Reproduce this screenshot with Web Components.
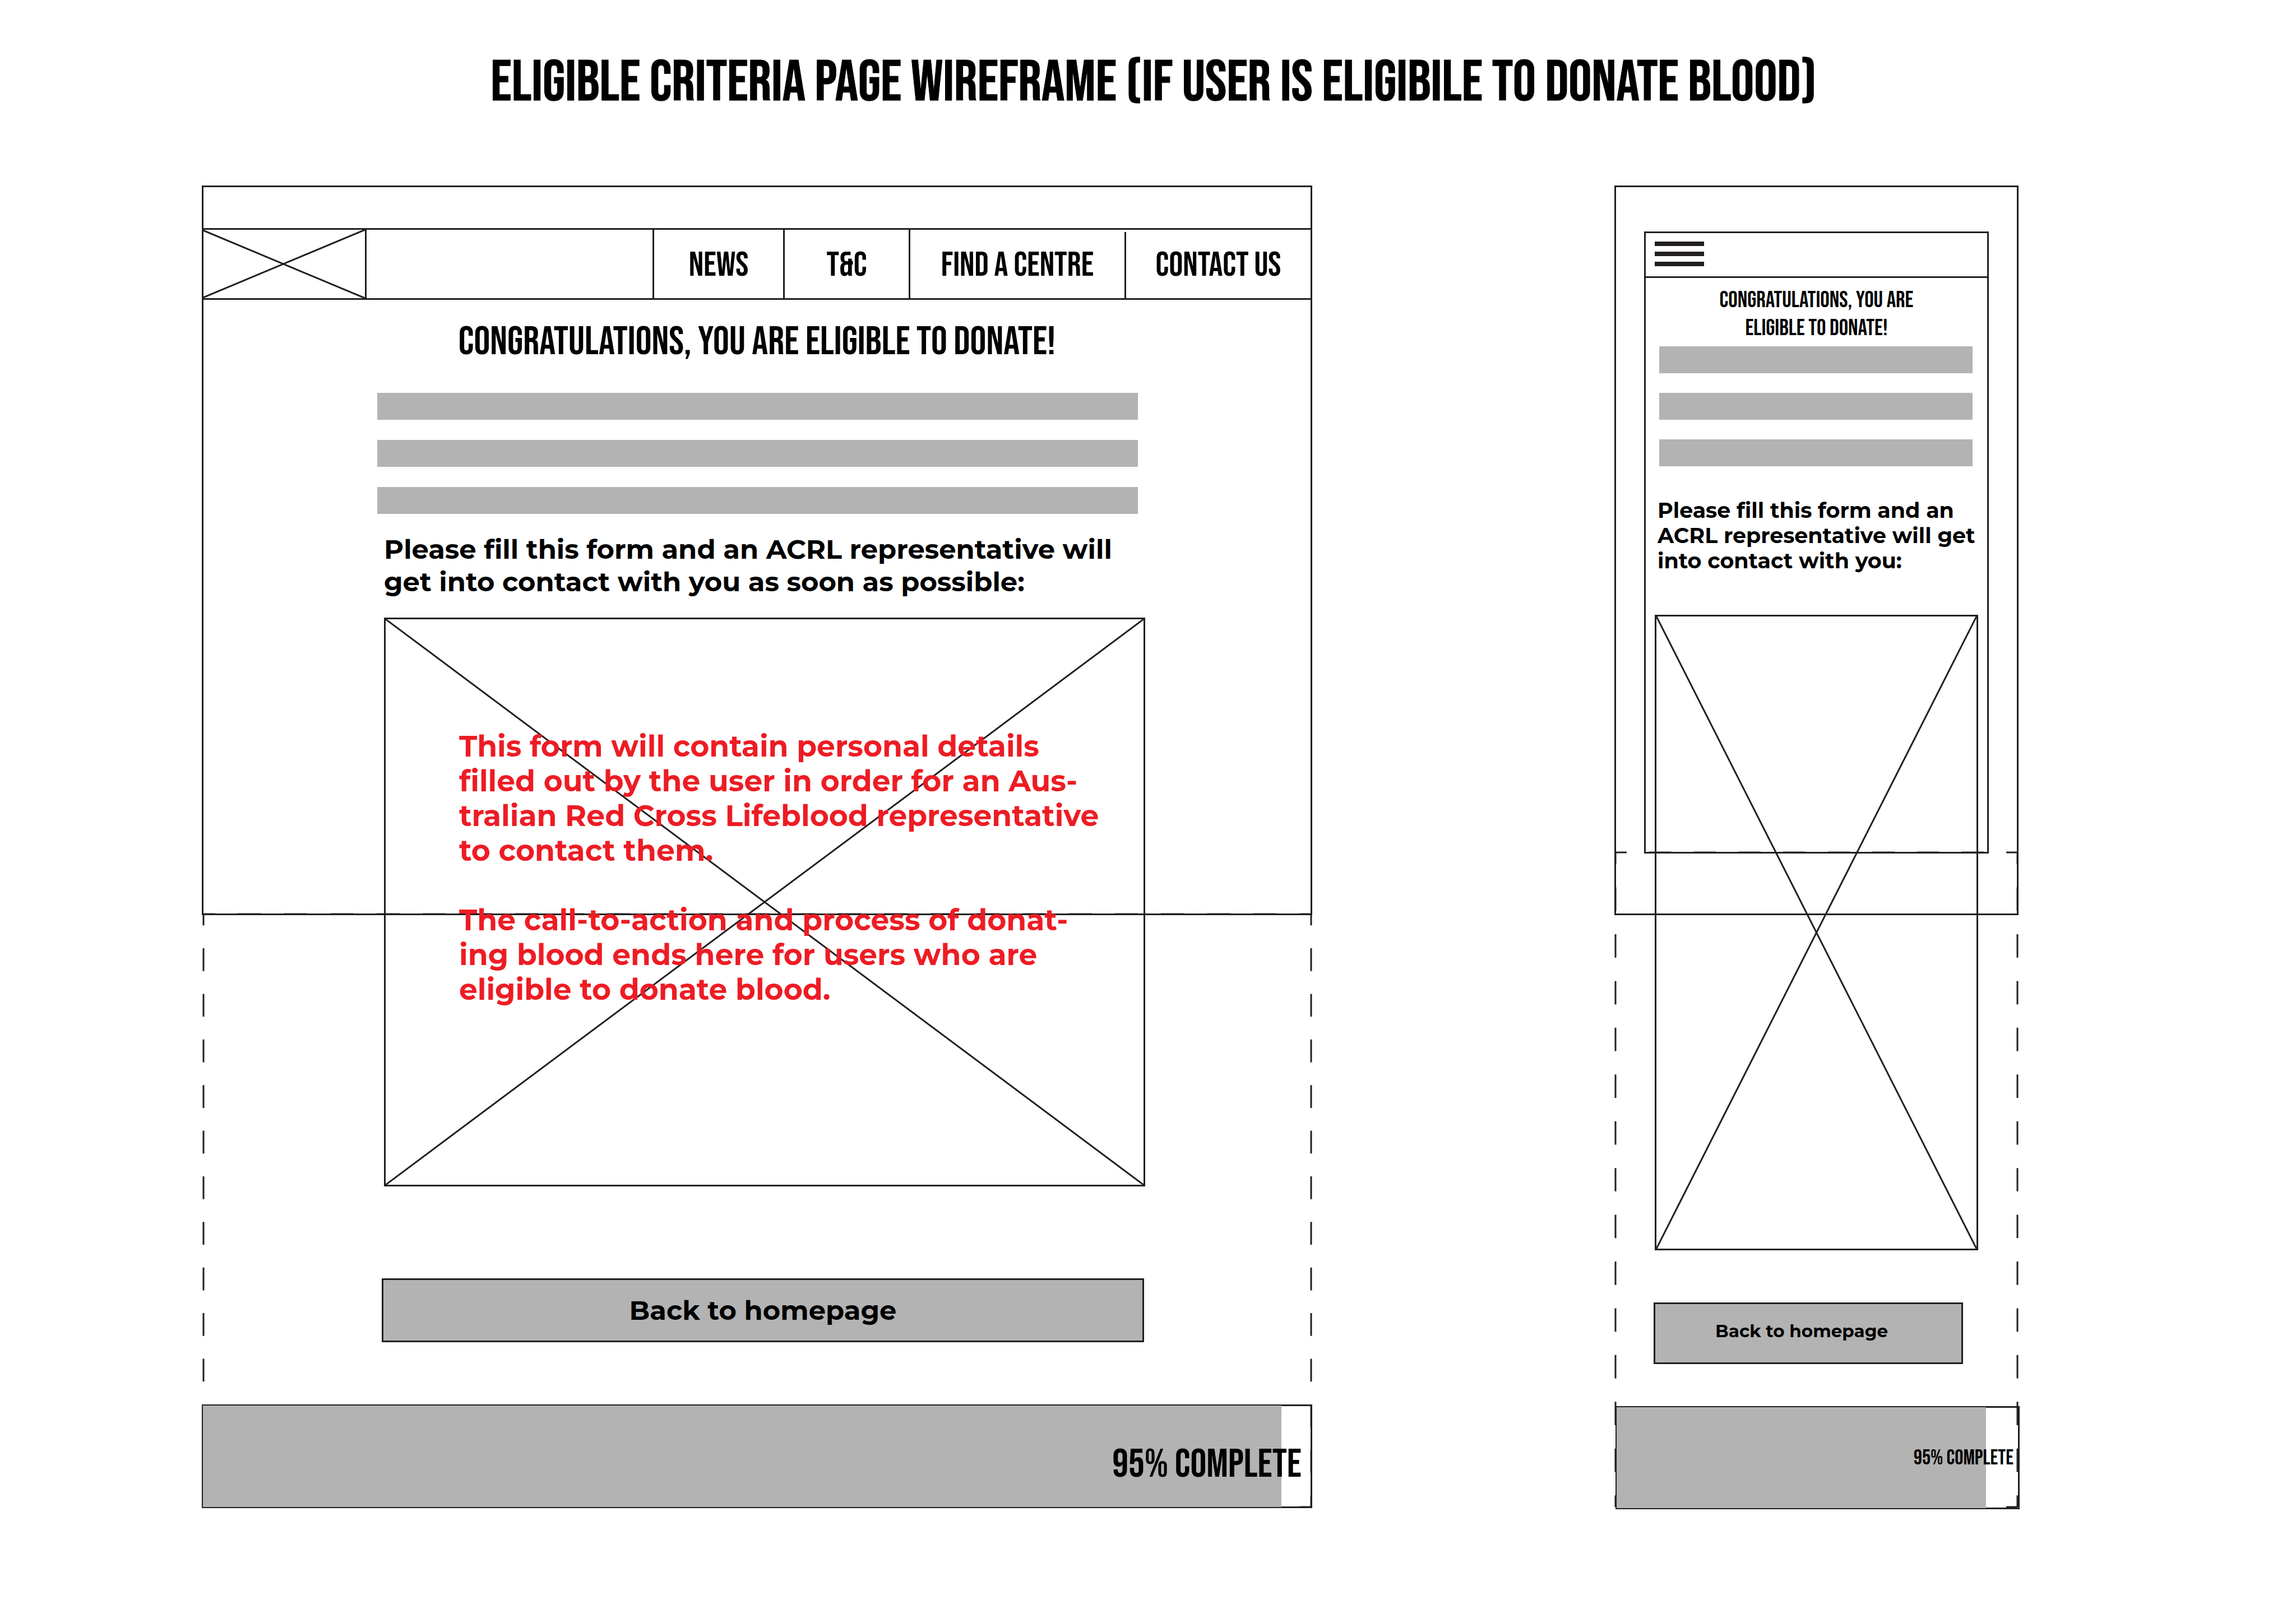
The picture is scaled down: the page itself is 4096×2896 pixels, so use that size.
<!DOCTYPE html>
<html lang="en">
<head>
<meta charset="utf-8">
<title>Eligible criteria page wireframe</title>
<style>
  body {
    margin: 0;
    background: #fff;
    color: #000;
    --line: #231f20;
    --fill: #b3b3b3;
    --note: #ed1c24;
    --stroke: 3px;
    --display: "Bebas Neue", "Open Sans Condensed", "Roboto", sans-serif;
    --text: "Montserrat", "Open Sans", "Inter", sans-serif;
  }
</style>
</head>
<body>
<wireframe-sheet></wireframe-sheet>

<template id="sheet">
  <style>
    :host { display: block; min-height: 100vh; }
    h1 {
      margin: 0;
      padding: 86px 0 0 20px;
      font: 400 103px/124px var(--display);
      -webkit-text-stroke: 1px #000;
      text-align: center;
    }
    main {
      display: grid;
      grid-template-columns: 360fr 1981fr 539fr 721fr 495fr;
      align-items: start;
      padding: 121px 0 200px;
    }
    .desktop { grid-column: 2; --fold-top: 1300px; --fold-height: 1058px; --fold-left: 3px; }
    .mobile { grid-column: 4; --fold-top: 1190px; --fold-height: 1168px; --fold-left: 2px; }
    h2 { margin: 0; font-family: var(--display); font-weight: 400; text-align: center; }
    p { margin: 0; font-family: var(--text); font-weight: 700; white-space: nowrap; }

    .desktop wf-nav { margin-top: 76px; }
    .desktop h2 { margin-top: 33px; font-size: 72px; line-height: 86px; }
    .desktop wf-lines { margin: 47px 311px 0 313px; gap: 36px; }
    .desktop p.lead { margin: 34px 0 0 325px; font-size: 48px; line-height: 58px; }
    .desktop wf-placeholder { margin: 35px 298px 0 325px; height: 1015px; }
    .desktop p.note { padding: 196px 0 0 131px; color: var(--note); font-size: 52px; line-height: 62px; }
    .desktop wf-button { margin: 164px 300px 0 321px; height: 114px; --size: 48px; }
    .desktop wf-progress { margin-top: 111px; height: 185px; --rest: 52px; --size: 72px; --leading: 86px; --label: 62px 16px 0 0; }

    .screen { grid-area: 1 / 1; margin: 82px 53px 0; height: 1110px; box-sizing: border-box; border: var(--stroke) solid var(--line); }
    .mobile wf-menu-bar { margin: 82px 53px 0; height: 83px; }
    .mobile h2 { margin-top: 15px; font-size: 41px; line-height: 50px; }
    .mobile wf-lines { margin: 7px 82px 0 80px; gap: 35px; }
    .mobile p.lead { margin: 56px 0 0 77px; font-size: 38px; line-height: 45px; }
    .mobile wf-placeholder { margin: 74px 72px 0; height: 1134px; }
    .mobile wf-button { margin: 93px 99px 0 70px; height: 110px; --size: 31px; --inset: 0 24px 8px 0; }
    .mobile wf-progress { margin: 75px -2px 0 2px; height: 184px; --rest: 57px; --size: 38px; --leading: 46px; --label: 67px 8px 0 0; }
  </style>
  <h1>ELIGIBLE CRITERIA PAGE WIREFRAME (IF USER IS ELIGIBILE TO DONATE BLOOD)</h1>
  <main>
    <wf-board class="desktop" columns="24" rows="13">
      <wf-nav></wf-nav>
      <h2>CONGRATULATIONS, YOU ARE ELIGIBLE TO DONATE!</h2>
      <wf-lines></wf-lines>
      <p class="lead">Please fill this form and an ACRL representative will<br>get into contact with you as soon as possible:</p>
      <wf-placeholder>
        <p class="note">This form will contain personal details<br>filled out by the user in order for an Aus-<br>tralian Red Cross Lifeblood representative<br>to contact them.<br><br>The call-to-action and process of donat-<br>ing blood ends here for users who are<br>eligible to donate blood.</p>
      </wf-placeholder>
      <wf-button>Back to homepage</wf-button>
      <wf-progress>95% COMPLETE</wf-progress>
    </wf-board>
    <wf-board class="mobile" columns="9" rows="14">
      <div class="screen" slot="layer"></div>
      <wf-menu-bar></wf-menu-bar>
      <h2>CONGRATULATIONS, YOU ARE<br>ELIGIBLE TO DONATE!</h2>
      <wf-lines></wf-lines>
      <p class="lead">Please fill this form and an<br>ACRL representative will get<br>into contact with you:</p>
      <wf-placeholder></wf-placeholder>
      <wf-button>Back to homepage</wf-button>
      <wf-progress>95% COMPLETE</wf-progress>
    </wf-board>
  </main>
</template>

<!-- Device frame, dashed area below the fold, and the page content stacked in one grid cell -->
<template id="board">
  <style>
    :host { display: grid; grid-template-columns: minmax(0, 1fr); align-items: start; }
    .frame, svg, .content { grid-area: 1 / 1; }
    .frame { height: 1302px; box-sizing: border-box; border: var(--stroke) solid var(--line); }
    svg {
      display: block;
      width: auto;
      justify-self: stretch;
      height: var(--fold-height);
      margin: var(--fold-top) 2px 0 var(--fold-left);
      overflow: visible;
      stroke: var(--line);
      stroke-width: 3;
      stroke-dasharray: 2 2;
      stroke-dashoffset: 1;
    }
    .content { display: flex; flex-direction: column; position: relative; }
  </style>
  <div class="frame"></div>
  <svg aria-hidden="true" width="100%">
    <line class="h" x1="0" y1="0" x2="100%" y2="0"/>
    <line class="h" x1="0" y1="100%" x2="100%" y2="100%"/>
    <line class="v" x1="0" y1="0" x2="0" y2="100%"/>
    <line class="v" x1="100%" y1="0" x2="100%" y2="100%"/>
  </svg>
  <slot name="layer"></slot>
  <div class="content"><slot></slot></div>
</template>

<template id="nav">
  <style>
    :host { display: block; }
    nav {
      display: grid;
      grid-template-columns: 294fr 513fr 233fr 224fr 385fr 332fr;
      grid-template-rows: minmax(0, 1fr);
      height: 128px;
      box-sizing: border-box;
      border: solid var(--line);
      border-width: var(--stroke) 0;
    }
    nav > * { border-right: var(--stroke) solid var(--line); box-sizing: border-box; }
    svg { display: block; width: 100%; height: 100%; stroke: var(--line); stroke-width: 3; }
    a {
      display: flex;
      align-items: center;
      justify-content: center;
      padding-top: 6px;
      color: inherit;
      text-decoration: none;
      font: 400 62px/74px var(--display);
    }
    .short { margin-top: 4px; padding-top: 2px; }
  </style>
  <nav>
    <div><svg aria-hidden="true"><line x1="0" y1="0" x2="100%" y2="100%"/><line x1="0" y1="100%" x2="100%" y2="0"/></svg></div>
    <div></div>
    <a href="#news">NEWS</a>
    <a href="#terms">T&amp;C</a>
    <a href="#centre" class="short">FIND A CENTRE</a>
    <a href="#contact">CONTACT US</a>
  </nav>
</template>

<template id="menu-bar">
  <style>
    :host { display: flex; box-sizing: border-box; border: var(--stroke) solid var(--line); }
    button { display: flex; margin: 0; padding: 15px 16px; border: 0; background: none; }
    svg { display: block; fill: var(--line); }
  </style>
  <button type="button" aria-label="Menu">
    <svg width="88" height="44" viewBox="0 0 88 44"><path d="M0 0H88V8H0ZM0 18H88V26H0ZM0 36H88V44H0Z"/></svg>
  </button>
</template>

<template id="lines">
  <style>
    :host { display: grid; }
    i { height: 48px; background: var(--fill); }
  </style>
  <i></i><i></i><i></i>
</template>

<template id="placeholder">
  <style>
    :host { display: grid; grid-template-columns: minmax(0, 1fr); grid-template-rows: minmax(0, 1fr); box-sizing: border-box; border: var(--stroke) solid var(--line); }
    svg, div { grid-area: 1 / 1; }
    svg { display: block; width: 100%; height: 100%; stroke: var(--line); stroke-width: 3; }
    div { position: relative; }
  </style>
  <svg aria-hidden="true"><line x1="0" y1="0" x2="100%" y2="100%"/><line x1="0" y1="100%" x2="100%" y2="0"/></svg>
  <div><slot></slot></div>
</template>

<template id="button">
  <style>
    :host { display: flex; }
    button {
      flex: 1;
      margin: 0;
      padding: var(--inset, 0);
      box-sizing: border-box;
      border: var(--stroke) solid var(--line);
      border-radius: 0;
      background: var(--fill);
      color: #000;
      font: 700 var(--size) var(--text);
    }
  </style>
  <button type="button"><slot></slot></button>
</template>

<template id="progress">
  <style>
    :host { display: grid; grid-template-columns: minmax(0, 1fr); box-sizing: border-box; border: var(--stroke) solid var(--line); }
    .fill, .label { grid-area: 1 / 1; }
    .fill { margin: -1px var(--rest) -1px -1px; background: var(--fill); }
    .label { justify-self: end; align-self: start; padding: var(--label); font: 400 var(--size)/var(--leading) var(--display); white-space: nowrap; }
  </style>
  <div class="fill"></div>
  <div class="label"><slot></slot></div>
</template>

<script>
  class WireframeElement extends HTMLElement {
    constructor() {
      super();
      const template = document.getElementById(this.constructor.template);
      this.attachShadow({ mode: 'open' }).append(template.content.cloneNode(true));
    }
  }

  class WfBoard extends WireframeElement {
    static template = 'board';
    // Each dash period is 4 path units, so every side starts and ends on half a dash.
    connectedCallback() {
      const set = (selector, count) => this.shadowRoot.querySelectorAll(selector)
        .forEach(line => line.setAttribute('pathLength', count * 4));
      set('.h', this.getAttribute('columns'));
      set('.v', this.getAttribute('rows'));
    }
  }

  const define = (name, template) => customElements.define(name, class extends WireframeElement {
    static template = template;
  });

  customElements.define('wf-board', WfBoard);
  define('wf-nav', 'nav');
  define('wf-menu-bar', 'menu-bar');
  define('wf-lines', 'lines');
  define('wf-placeholder', 'placeholder');
  define('wf-button', 'button');
  define('wf-progress', 'progress');
  define('wireframe-sheet', 'sheet');
</script>
</body>
</html>
